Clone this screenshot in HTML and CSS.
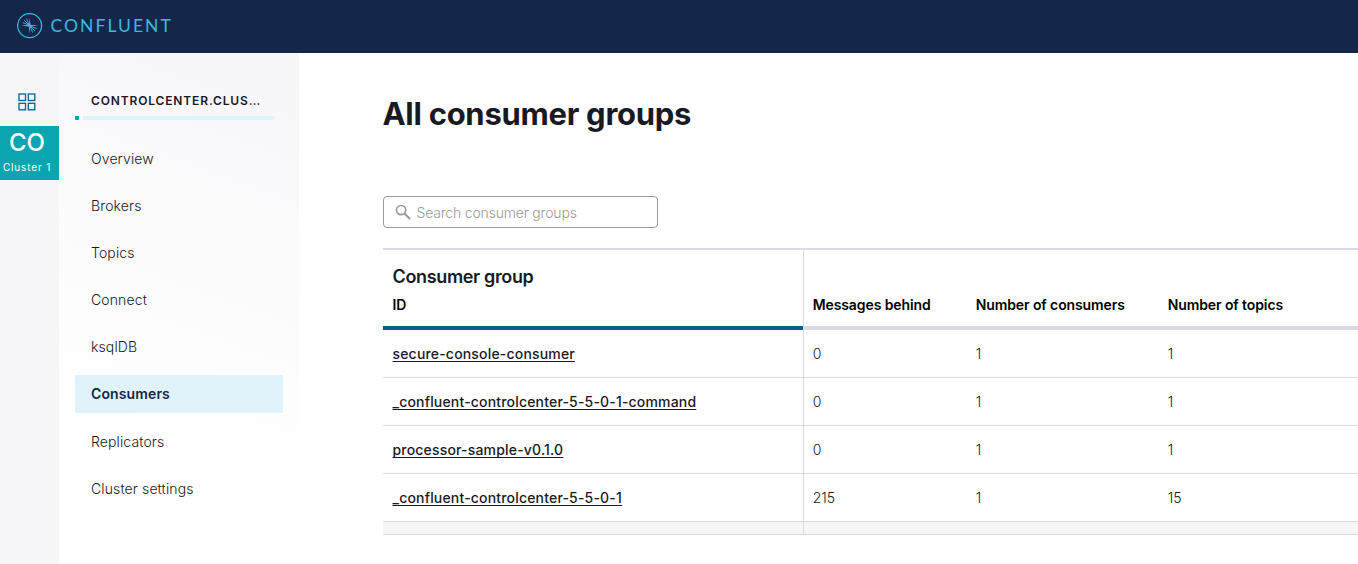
FILE: index.html
```html
<!DOCTYPE html>
<html lang="en">
<head>
<meta charset="utf-8">
<title>All consumer groups</title>
<link rel="stylesheet" href="styles.css">
</head>
<body>
<header class="topbar">
  <svg class="logo-mark" width="26" height="26" viewBox="0 0 26 26" fill="none" stroke="#3db8e0">
    <circle cx="12.600" cy="12.600" r="12" stroke-width="1.300"/>
    <g transform="translate(-.4 -.4)">
      <path d="M4.500 13L12.300 12.200 13 4.800 13.800 12.200 21.500 13 13.800 13.800 13 21.200 12.200 13.800z" fill="#3db8e0" stroke="none"/>
      <path d="M12.500 12.500L6 10M12.500 12.500L7.600 7.600M12.500 12.500L10 6M13.500 13.500l6.500 2.500M13.500 13.500l4.900 4.900M13.500 13.500l2.500 6.500" stroke-width=".85"/>
    </g>
  </svg>
  <span class="logo-text">CONFLUENT</span>
</header>
<div class="shell">
  <aside class="rail">
    <svg class="grid-icon" width="18" height="18" viewBox="0 0 18 18" fill="none" stroke="#05608e" stroke-width="1.300">
      <rect x="1" y="1" width="6.500" height="6.500"/><rect x="10.300" y="1" width="6.500" height="6.500"/>
      <rect x="1" y="10.300" width="6.500" height="6.500"/><rect x="10.300" y="10.300" width="6.500" height="6.500"/>
    </svg>
    <a class="cluster"><span class="cluster-code">CO</span><span class="cluster-name">Cluster 1</span></a>
  </aside>
  <nav class="sidebar">
    <div class="cluster-title">CONTROLCENTER.CLUS…</div>
    <div class="rule"><i class="rule-dot"></i><i class="rule-line"></i></div>
    <div class="menu">
      <a class="item">Overview</a>
      <a class="item">Brokers</a>
      <a class="item">Topics</a>
      <a class="item">Connect</a>
      <a class="item">ksqlDB</a>
      <a class="item active">Consumers</a>
      <a class="item">Replicators</a>
      <a class="item">Cluster settings</a>
    </div>
  </nav>
  <main class="main">
    <h1 class="title">All consumer groups</h1>
    <div class="search">
      <svg width="16" height="16" viewBox="0 0 16 16" fill="none" stroke="#999">
        <circle cx="6.100" cy="6.100" r="4.600" stroke-width="1.700"/><path d="M9.500 9.500L15 15" stroke-width="2"/>
      </svg>
      <span class="placeholder">Search consumer groups</span>
    </div>
    <div class="table">
      <div class="row head">
        <div class="cell id"><span class="group">Consumer group</span><span>ID</span></div>
        <div class="cell">Messages behind</div><div class="cell">Number of consumers</div><div class="cell">Number of topics</div>
      </div>
      <div class="row"><div class="cell id"><a class="link">secure-console-consumer</a></div><div class="cell">0</div><div class="cell">1</div><div class="cell">1</div></div>
      <div class="row"><div class="cell id"><a class="link">_confluent-controlcenter-5-5-0-1-command</a></div><div class="cell">0</div><div class="cell">1</div><div class="cell">1</div></div>
      <div class="row"><div class="cell id"><a class="link">processor-sample-v0.1.0</a></div><div class="cell">0</div><div class="cell">1</div><div class="cell">1</div></div>
      <div class="row"><div class="cell id"><a class="link">_confluent-controlcenter-5-5-0-1</a></div><div class="cell">215</div><div class="cell">1</div><div class="cell">15</div></div>
      <div class="row foot"><div class="cell id"></div><div class="cell"></div><div class="cell"></div><div class="cell"></div></div>
    </div>
  </main>
</div>
</body>
</html>
```
FILE: styles.css
```css
* { box-sizing: border-box; }
body {
  margin: 0;
  height: 564px;
  overflow: hidden;
  background: #fff;
  color: #191924;
  font: 300 14px/20px Inter, "Liberation Sans", sans-serif;
}
.topbar {
  height: 53px;
  padding: 0 0 2px 17px;
  display: flex;
  align-items: center;
  gap: 7.500px;
  background: #142748;
}
.logo-text {
  color: #3db8e0;
  font: 400 17.500px/20px Lato, sans-serif;
  letter-spacing: 2.050px;
}
.shell { display: flex; height: 511px; }
.rail {
  flex: none;
  width: 59px;
  padding-top: 40px;
  background: #f6f6f9;
}
.grid-icon { display: block; margin: 0 0 15px 18px; }
.cluster {
  display: flex;
  flex-direction: column;
  height: 54px;
  padding-right: 5px;
  align-items: center;
  background: #0aa5b0;
  color: #fff;
}
.cluster-code { font-size: 24px; font-weight: 500; line-height: 34px; }
.cluster-name { font-size: 10px; font-weight: 400; line-height: 15px; letter-spacing: .85px; white-space: nowrap; }
.sidebar {
  flex: none;
  width: 240px;
  padding: 38px 16px 0;
  background: linear-gradient(200deg, #f6f6f9 0%, #fdfdfd 55%, #fff 85%);
}
.cluster-title {
  padding-left: 16px;
  font-size: 12px;
  font-weight: 600;
  letter-spacing: .85px;
  white-space: nowrap;
}
.rule { display: flex; gap: 4px; height: 4px; margin: 5px 8px 20px 0; }
.rule-dot { width: 4px; background: #0aa5b0; }
.rule-line { flex: 1; background: #e0f3fa; }
.menu { display: flex; flex-direction: column; gap: 9px; }
.item { height: 38px; padding-left: 16px; line-height: 38px; letter-spacing: .12px; }
.active { margin-bottom: 1px; background: #e0f3fa; color: #142748; font-weight: 600; }
.main { flex: 1; min-width: 0; padding: 41px 0 0 84px; }
.title { margin: 0 0 0 -.5px; font-size: 31px; font-weight: 650; line-height: 39px; letter-spacing: -.28px; }
.search {
  display: flex;
  align-items: center;
  gap: 5.500px;
  width: 275px;
  height: 32px;
  margin: 63px 0 20px;
  padding-left: 11px;
  border: 1px solid #999;
  border-radius: 4px;
}
.placeholder { color: #999; padding-top: 2px; letter-spacing: -.18px; }
.table { border-top: 2px solid #dadae2; }
.row { display: grid; grid-template-columns: 421px 163px 192px 1fr; height: 48px; }
.cell { padding: 0 9px 0 8.700px; line-height: 48px; height: 48px; border-bottom: 1px solid #dadae2; }
.id { padding-left: 9.500px; border-right: 1px solid #dadae2; }
.head { height: 80px; font-weight: 600; color: #000; }
.head .cell {
  display: flex;
  flex-direction: column;
  justify-content: flex-end;
  height: 80px;
  padding-bottom: 11px;
  line-height: 20px;
  letter-spacing: -.1px;
  border-bottom-width: 4px;
}
.head .id {
  border-right: 0;
  background: linear-gradient(#dadae2, #dadae2) right / 1px 100% no-repeat border-box;
  border-bottom: 0;
  padding-bottom: 0;
}
.head .id::after {
  content: "";
  height: 4px;
  margin: 11px 1px 0 -9.500px;
  width: 420px;
  background: #00608a;
}
.head .group { margin-bottom: 6px; font-size: 18px; line-height: 24px; letter-spacing: -.35px; color: #191924; }
.link { font-weight: 500; letter-spacing: .18px; text-decoration: underline; text-underline-offset: 2px; text-decoration-skip-ink: none; }
.foot, .foot .cell { height: 13px; }
.foot { background: #f6f6f9; }
```
